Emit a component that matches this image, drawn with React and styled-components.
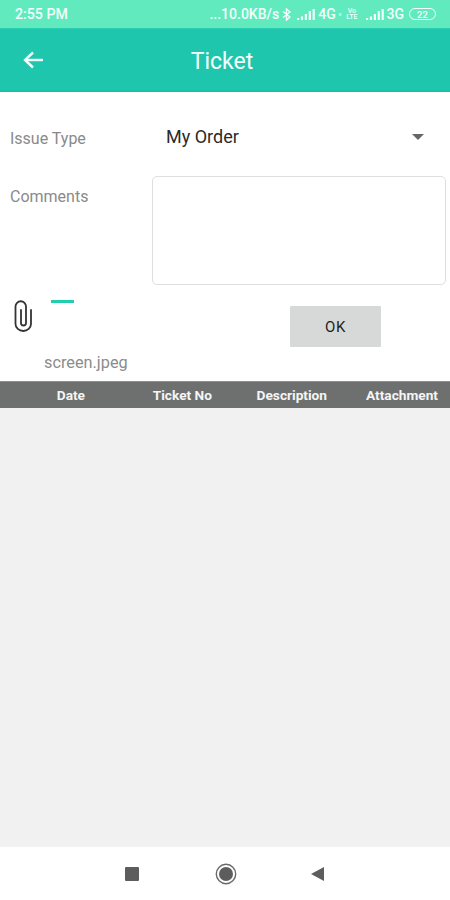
import React from 'react';
import styled, { createGlobalStyle } from 'styled-components';

const GlobalStyle = createGlobalStyle`
  html, body {
    margin: 0;
    padding: 0;
    background: #fff;
    font-family: Roboto, "Liberation Sans", sans-serif;
  }
`;

const Screen = styled.div`
  width: 450px;
  height: 900px;
  display: flex;
  flex-direction: column;
  overflow: hidden;
  background: #fff;
`;

const StatusBar = styled.div`
  height: 28px;
  flex: none;
  display: flex;
  align-items: center;
  justify-content: space-between;
  padding: 0 14px 0 15px;
  background: #62eabf;
  color: #f2fff9;
  font-size: 14.2px;
  font-weight: 500;
`;

const StatusRight = styled.div`
  display: flex;
  align-items: center;
  gap: 3px;
`;

const TinyText = styled.span`
  font-size: ${props => props.size || 14}px;
  line-height: ${props => (props.stack ? 0.9 : 1)};
  margin-left: ${props => props.gapLeft || 0}px;
  text-align: center;
  white-space: nowrap;
`;

const SignalIcon = styled.svg`
  display: block;
  flex: none;
  margin-left: ${props => props.gapLeft}px;
`;

const Battery = styled.span`
  width: 27px;
  height: 12px;
  margin-left: 2px;
  box-sizing: border-box;
  border: 1px solid #f2fff9;
  border-radius: 6px;
  display: flex;
  align-items: center;
  justify-content: center;
  font-size: 9.5px;
`;

const AppBar = styled.header`
  height: 61px;
  flex: none;
  position: relative;
  display: flex;
  align-items: center;
  justify-content: center;
  background: #1fc6ae;
  border-top: 1px solid #28cdb2;
  border-bottom: 2px solid #19bfa7;
  color: #f4fffc;
  font-size: 23px;
`;

const Title = styled.span`
  margin: 3px 6px 0 0;
`;

const BackButton = styled.span`
  position: absolute;
  left: 23px;
  top: 22px;
  display: flex;
`;

const Form = styled.div`
  height: 289px;
  flex: none;
  box-sizing: border-box;
  padding-top: 32px;
  display: flex;
  flex-direction: column;
`;

const IssueRow = styled.div`
  height: 28px;
  display: flex;
  align-items: center;
  padding-left: 10px;
`;

const Label = styled.div`
  width: 156px;
  flex: none;
  color: #8a8a8a;
  font-size: 16px;
`;

const SelectValue = styled.div`
  flex: 1;
  color: #2a2a2a;
  font-size: 18px;
  margin-top: -3px;
`;

const Caret = styled.span`
  width: 0;
  height: 0;
  margin: -2px 26px 0 0;
  border-left: 6px solid transparent;
  border-right: 6px solid transparent;
  border-top: 6px solid #666;
`;

const CommentsRow = styled.div`
  margin-top: 24px;
  display: flex;
  padding: 0 4px 0 10px;
`;

const CommentsLabel = styled(Label)`
  width: 142px;
  padding-top: 11px;
`;

const CommentBox = styled.div`
  flex: 1;
  height: 109px;
  box-sizing: border-box;
  border: 1px solid #dcdfdf;
  border-radius: 5px;
`;

const AttachRow = styled.div`
  flex: 1;
  display: flex;
  padding: 15px 0 0 12px;
`;

const AttachLeft = styled.div`
  width: 278px;
  flex: none;
`;

const ClipRow = styled.div`
  display: flex;
  align-items: flex-start;
  gap: 18px;
`;

const ProgressMark = styled.span`
  width: 23px;
  height: 3px;
  background: #22cdb0;
`;

const FileName = styled.div`
  margin: 21px 0 0 32px;
  color: #8c8c8c;
  font-size: 16.3px;
  line-height: 18px;
`;

const OkButton = styled.button`
  width: 91px;
  height: 41px;
  margin-top: 6px;
  border: none;
  border-radius: 1px;
  background: #d7d9d9;
  color: #222;
  font-family: inherit;
  font-size: 15px;
  letter-spacing: 0.6px;
`;

const TableHead = styled.div`
  height: 27px;
  flex: none;
  box-sizing: border-box;
  display: grid;
  grid-template-columns: 85px 127px 115px 111px;
  align-items: center;
  background: #6e7070;
  border-top: 1px solid #8e8f8f;
  color: #f5f5f5;
  font-size: 13.7px;
  font-weight: 700;
`;

const HeadCell = styled.div`
  justify-self: end;
  white-space: nowrap;
`;

const TableBody = styled.div`
  flex: 1;
  background: #f1f1f1;
`;

const NavBar = styled.nav`
  height: 53px;
  flex: none;
  display: flex;
  align-items: center;
  background: #fff;
  padding: 0 0 0 125px;
`;

const StopKey = styled.span`
  width: 14px;
  height: 14px;
  background: #5d5d5d;
  border-radius: 1px;
`;

const HomeIcon = styled.svg`
  display: block;
  flex: none;
  margin-left: 76px;
`;

const BackKeyIcon = styled.svg`
  display: block;
  flex: none;
  margin-left: 73px;
`;

function BackArrow() {
  return (
    <svg width="20" height="18" viewBox="0 0 20 18" fill="none" stroke="#f4fffc" strokeWidth="2.4">
      <path d="M20 9H2" />
      <path d="M10 1.5L2 9l8 7.5" />
    </svg>
  );
}

function Signal({ gapLeft }) {
  return (
    <SignalIcon gapLeft={gapLeft} width="18" height="11" viewBox="0 0 18 11" fill="#f2fff9">
      <rect x="0" y="9" width="2.2" height="2" />
      <rect x="3.9" y="7.5" width="2.2" height="3.5" />
      <rect x="7.8" y="5" width="2.2" height="6" />
      <rect x="11.7" y="2" width="2.2" height="9" />
      <rect x="15.6" y="0" width="2.2" height="11" />
    </SignalIcon>
  );
}

function Bluetooth() {
  return (
    <svg width="9" height="13" viewBox="0 0 9 13" fill="none" stroke="#f2fff9" strokeWidth="1.4">
      <path d="M1 3.5l7 5.5-3.5 3V1L8 4 1 9.5" />
    </svg>
  );
}

function PaperClip() {
  return (
    <svg width="21" height="33" viewBox="0 0 21 33" fill="none" stroke="#333" strokeWidth="1.8" strokeLinecap="round">
      <path d="M9 10v13a2.5 2.5 0 0 0 5 0V6.5a5.25 5.25 0 0 0-10.5 0V24a7.75 7 0 0 0 15.5 0V10" />
    </svg>
  );
}

export default function App() {
  return (
    <Screen>
      <GlobalStyle />
      <StatusBar>
        <span>2:55 PM</span>
        <StatusRight>
          <TinyText>...10.0KB/s</TinyText>
          <Bluetooth />
          <Signal gapLeft={3} />
          <TinyText>4G</TinyText>
          <TinyText size={5}>ıı</TinyText>
          <TinyText size={7} stack gapLeft={2}>Vo<br />LTE</TinyText>
          <Signal gapLeft={5} />
          <TinyText>3G</TinyText>
          <Battery>22</Battery>
        </StatusRight>
      </StatusBar>
      <AppBar>
        <BackButton><BackArrow /></BackButton>
        <Title>Ticket</Title>
      </AppBar>
      <Form>
        <IssueRow>
          <Label>Issue Type</Label>
          <SelectValue>My Order</SelectValue>
          <Caret />
        </IssueRow>
        <CommentsRow>
          <CommentsLabel>Comments</CommentsLabel>
          <CommentBox />
        </CommentsRow>
        <AttachRow>
          <AttachLeft>
            <ClipRow>
              <PaperClip />
              <ProgressMark />
            </ClipRow>
            <FileName>screen.jpeg</FileName>
          </AttachLeft>
          <OkButton>OK</OkButton>
        </AttachRow>
      </Form>
      <TableHead>
        <HeadCell>Date</HeadCell>
        <HeadCell>Ticket No</HeadCell>
        <HeadCell>Description</HeadCell>
        <HeadCell>Attachment</HeadCell>
      </TableHead>
      <TableBody />
      <NavBar>
        <StopKey />
        <HomeIcon width="22" height="22" viewBox="0 0 22 22">
          <circle cx="11" cy="11" r="9.7" fill="none" stroke="#6a6a6a" strokeWidth="1.4" />
          <circle cx="11" cy="11" r="7" fill="#5d5d5d" />
        </HomeIcon>
        <BackKeyIcon width="14" height="16" viewBox="0 0 14 16">
          <path d="M14 1v14L1 8z" fill="#5d5d5d" />
        </BackKeyIcon>
      </NavBar>
    </Screen>
  );
}
